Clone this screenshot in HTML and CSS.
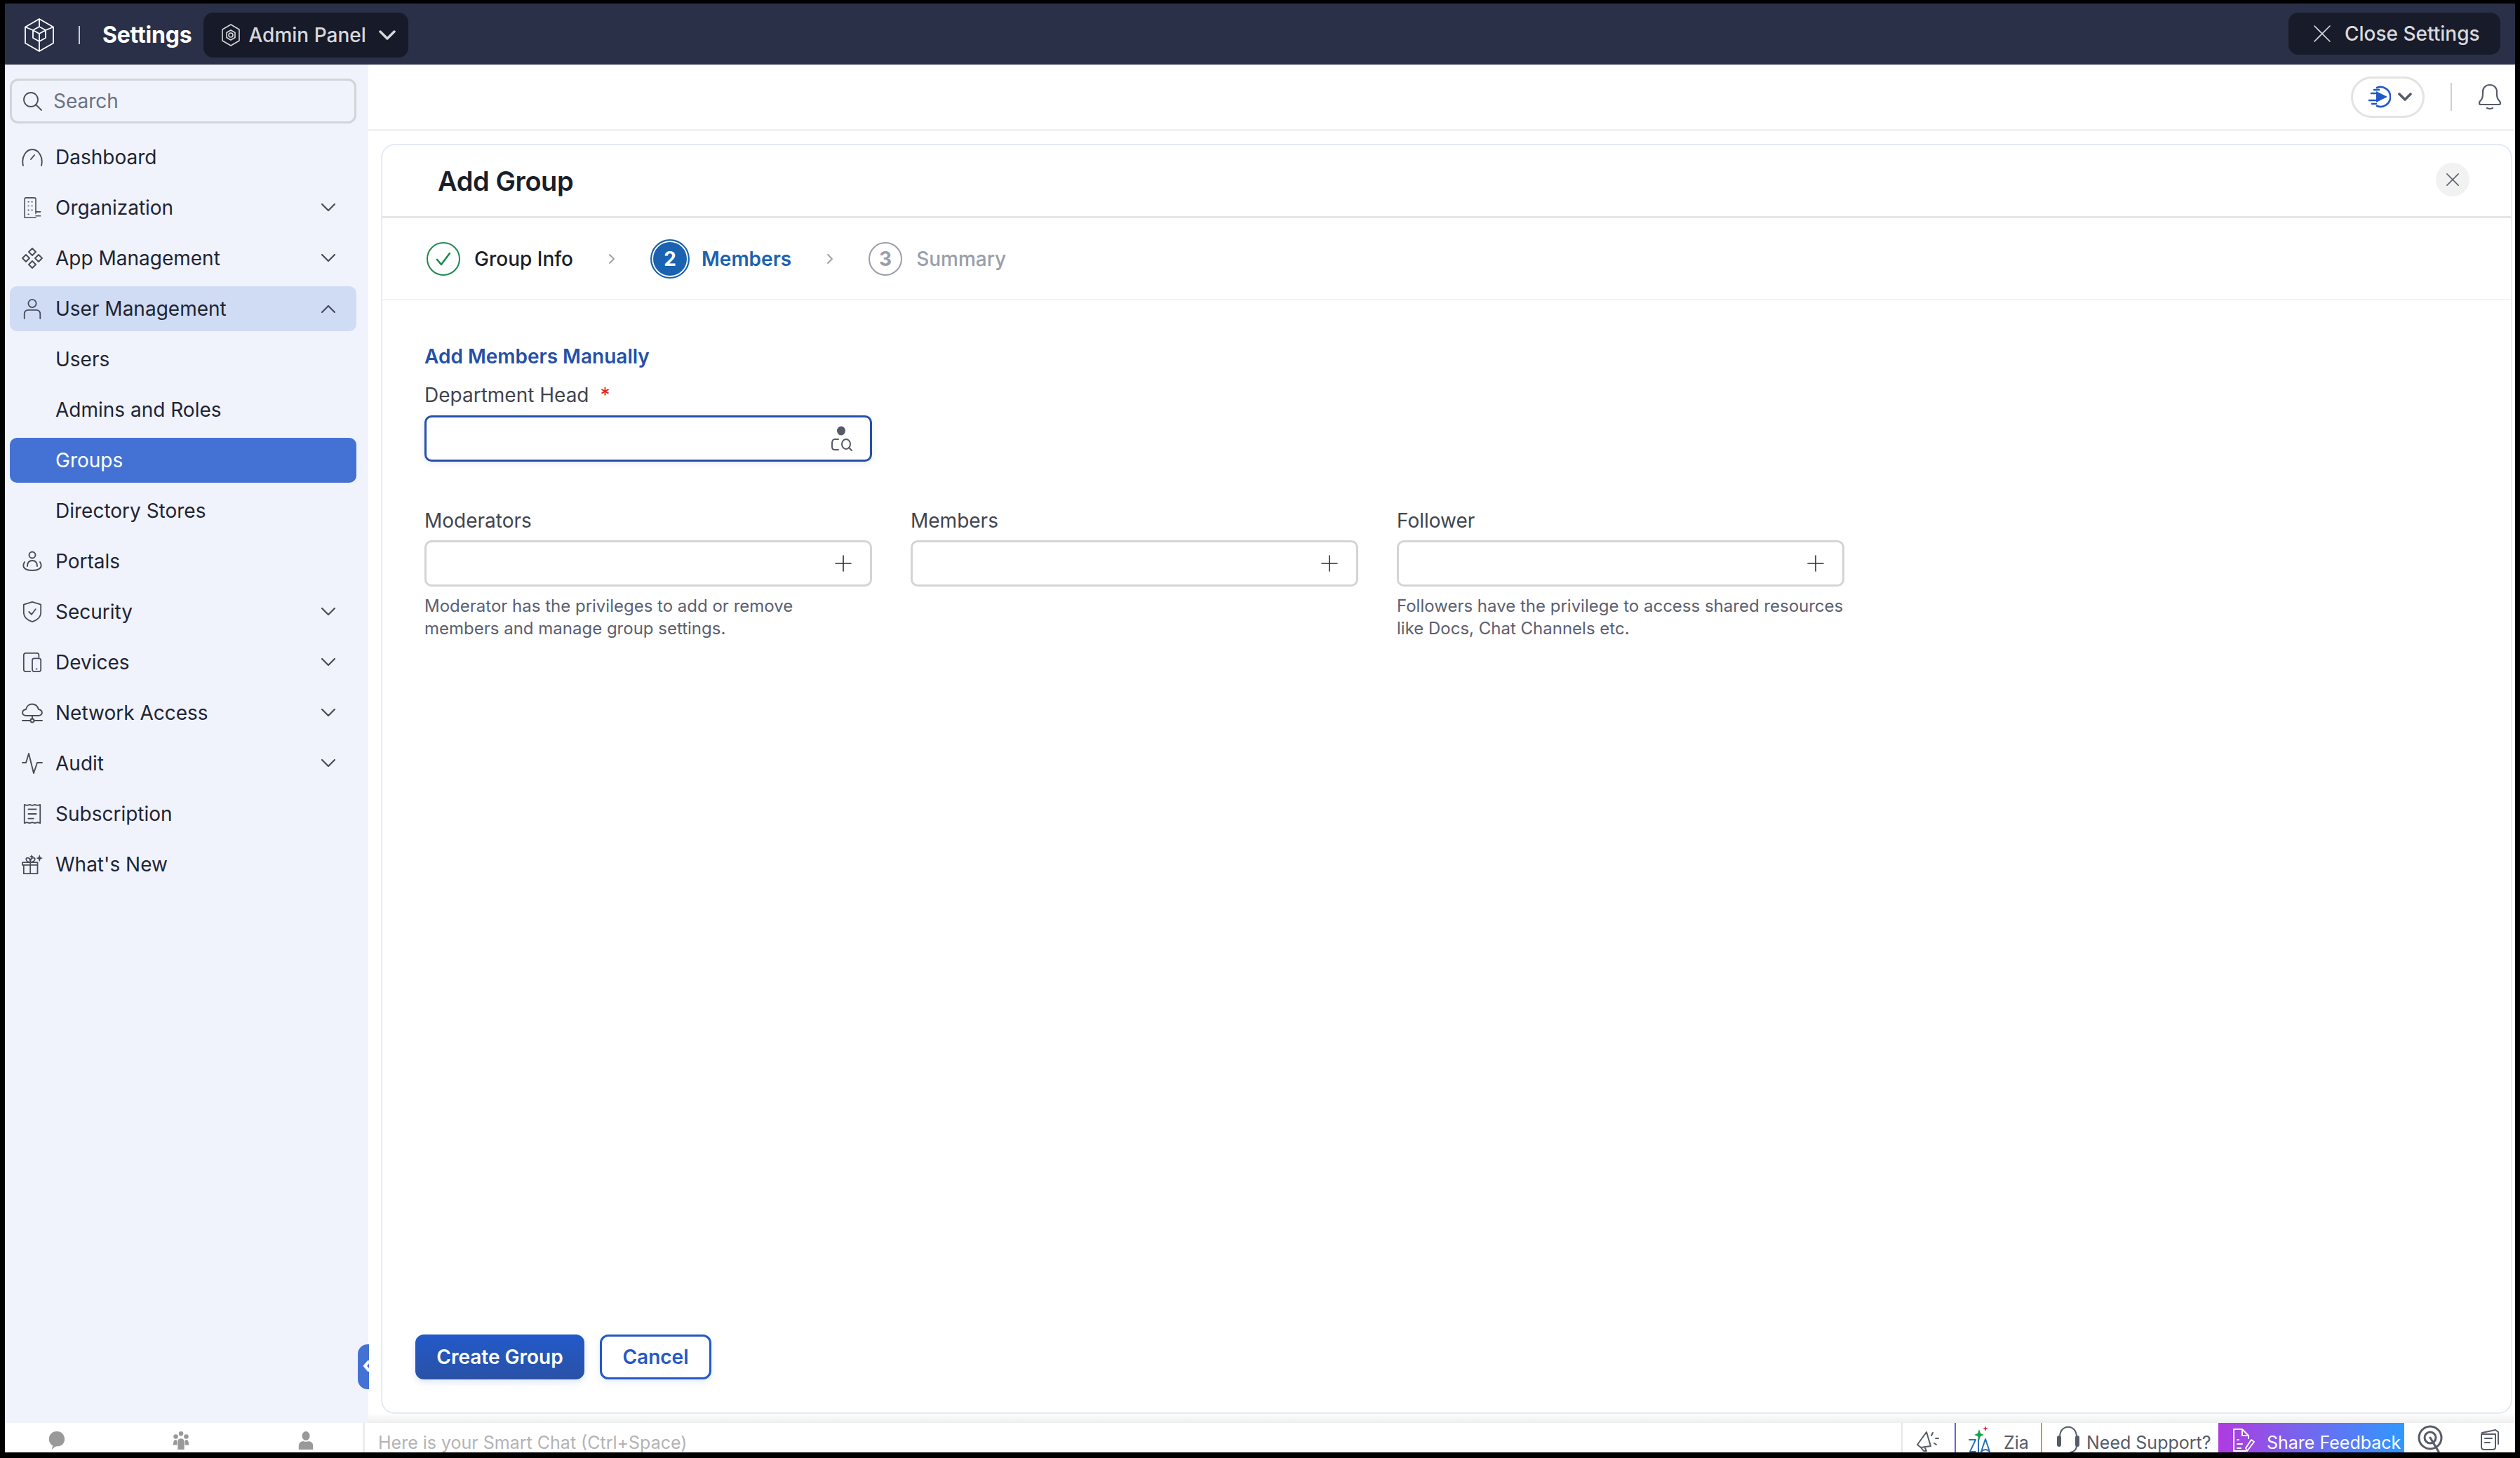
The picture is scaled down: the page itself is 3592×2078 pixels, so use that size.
FILE: index.html
```html
<!DOCTYPE html>
<html lang="en">
<head>
	<meta charset="UTF-8">
	<title>Add Group</title>
	<link rel="stylesheet" href="styles.css">
</head>
<body>
	<div class="frame">
		<div class="topbar">
			<svg class="logo" viewBox="0 0 42 48"><path d="M21 1 41 12.5V35.5L21 47 1 35.5V12.5ZM21 12 30 17V28L21 33 12 28V17ZM12 17 21 22 30 17M21 22V33M1 12.5 12 17M41 12.5 30 17M21 33V47M21 1V12"/></svg>
			<span class="top-divider"></span>
			<span class="top-title">Settings</span>
			<div class="top-pill">
				<svg class="pill-icon" viewBox="0 0 26 32"><path d="M13 1 25 8V24L13 31 1 24V8Z"/><circle cx="13" cy="16" r="3"/><path d="M13 9 19 12.500V19.500L13 23 7 19.500V12.500Z"/></svg>
				<span>Admin Panel</span>
				<svg class="pill-chevron" viewBox="0 0 24 14"><path d="M2 2 12 12 22 2"/></svg>
			</div>
			<div class="close-settings">
				<svg class="close-x" viewBox="0 0 24 24"><path d="M1 1 23 23M23 1 1 23"/></svg>
				<span>Close Settings</span>
			</div>
		</div>

		<div class="middle">
			<div class="sidebar">
				<div class="search">
					<svg class="search-icon" viewBox="0 0 28 28"><circle cx="12" cy="12" r="10"/><path d="M19 19 27 27"/></svg>
					<span>Search</span>
				</div>
				<ul class="nav">
					<li class="nav-item"><svg class="nav-icon" viewBox="0 0 30 30"><path d="M2 27C-1 15 6 4 15 4S31 15 28 27M18 12 13 18"/></svg><span>Dashboard</span></li>
					<li class="nav-item"><svg class="nav-icon" viewBox="0 0 30 36"><path d="M2 35V3Q2 1 4 1H18Q21 1 21 3V28M2 35H21M21 25H29M21 32H29M8 8H9M14 8H15M8 15H9M14 15H15M8 22H9M14 22H15M8 29H9"/></svg><span>Organization</span><svg class="chev" viewBox="0 0 20 12"><path d="M1 1 10 10 19 1"/></svg></li>
					<li class="nav-item"><svg class="nav-icon" viewBox="0 0 30 30"><path d="M15 1 20 6 15 11 10 6ZM15 19 20 24 15 29 10 24ZM6 10 11 15 6 20 1 15ZM24 10 29 15 24 20 19 15Z"/></svg><span>App Management</span><svg class="chev" viewBox="0 0 20 12"><path d="M1 1 10 10 19 1"/></svg></li>
					<li class="nav-item open"><svg class="nav-icon" viewBox="0 0 30 32"><circle cx="15" cy="8" r="6"/><path d="M3 31V24Q3 18 9 18H21Q27 18 27 24V31"/></svg><span>User Management</span><svg class="chev" viewBox="0 0 20 12"><path d="M1 11 10 2 19 11"/></svg></li>
					<li class="nav-item sub"><span>Users</span></li>
					<li class="nav-item sub"><span>Admins and Roles</span></li>
					<li class="nav-item sub active"><span>Groups</span></li>
					<li class="nav-item sub"><span>Directory Stores</span></li>
					<li class="nav-item"><svg class="nav-icon" viewBox="0 0 30 30"><circle cx="15" cy="6" r="4.500"/><path d="M4 16C-1 24 6 28 15 28S31 24 26 16M8 22Q8 14 15 14T22 22"/></svg><span>Portals</span></li>
					<li class="nav-item"><svg class="nav-icon" viewBox="0 0 30 32"><path d="M15 1 28 5V17C28 24 22 29 15 31 8 29 2 24 2 17V5ZM10 16 14 20 20 12"/></svg><span>Security</span><svg class="chev" viewBox="0 0 20 12"><path d="M1 1 10 10 19 1"/></svg></li>
					<li class="nav-item"><svg class="nav-icon" viewBox="0 0 30 32"><path d="M12 30H5Q2 30 2 27V5Q2 2 5 2H22Q25 2 25 5V8M15 13Q15 10 18 10H25Q28 10 28 13V27Q28 30 25 30H18Q15 30 15 27ZM21 26H22"/></svg><span>Devices</span><svg class="chev" viewBox="0 0 20 12"><path d="M1 1 10 10 19 1"/></svg></li>
					<li class="nav-item"><svg class="nav-icon" viewBox="0 0 30 30"><path d="M6 19C-1 18 0 11 6 10 8 0 21 0 24 10 30 11 31 18 24 19ZM1 26H12M18 26H29M15 19V23"/><circle cx="15" cy="26" r="2.500"/></svg><span>Network Access</span><svg class="chev" viewBox="0 0 20 12"><path d="M1 1 10 10 19 1"/></svg></li>
					<li class="nav-item"><svg class="nav-icon" viewBox="0 0 30 30"><path d="M1 14H6L10 1 17 29 22 14H29"/></svg><span>Audit</span><svg class="chev" viewBox="0 0 20 12"><path d="M1 1 10 10 19 1"/></svg></li>
					<li class="nav-item"><svg class="nav-icon" viewBox="0 0 30 32"><path d="M3 2 7 3 11 2 15 3 19 2 23 3 27 2V30L23 29 19 30 15 29 11 30 7 29 3 30ZM9 9H21M9 16H21M9 23H17"/></svg><span>Subscription</span></li>
					<li class="nav-item"><svg class="nav-icon" viewBox="0 0 32 32"><path d="M3 17H24V30H3ZM1 13H24V17H1ZM13 13V30M13 13C6 12 5 6 9 6S13 10 13 13C13 10 14 6 18 6S20 12 13 13"/><path class="fill" d="M27 1 28.500 5 32 6.500 28.500 8 27 12 25.500 8 22 6.500 25.500 5ZM15 1 16 3 18 4 16 5 15 7 14 5 12 4 14 3Z"/></svg><span>What's New</span></li>
				</ul>
			</div>
			<div class="side-handle"><span class="handle-arrow">‹</span></div>

			<div class="main">
				<div class="main-header">
					<div class="guide-pill">
						<svg class="guide-icon" viewBox="0 0 34 32"><path d="M14 3A14 14 0 1 1 14 29M10 6H17M6 11H12M3 21H12M7 26H13"/><path class="fill" d="M13 8 29 16 13 24Z"/></svg>
						<svg class="guide-chev" viewBox="0 0 20 12"><path d="M2 2 10 10 18 2"/></svg>
					</div>
					<span class="header-divider"></span>
					<svg class="bell" viewBox="0 0 34 38"><path d="M2 28Q2 26 4 24 7 21 7 15V12C7 6 11 2 17 2S27 6 27 12V15C27 21 30 24 30 24 32 26 32 28 32 28 32 29 31 30 30 30H4C3 30 2 29 2 28ZM13 35Q17 37 21 35"/></svg>
				</div>

				<div class="card">
					<div class="card-title">
						<h1>Add Group</h1>
						<div class="card-close"><svg viewBox="0 0 20 20"><path d="M1 1 19 19M19 1 1 19"/></svg></div>
					</div>

					<div class="steps">
						<div class="step done">
							<div class="step-num"><svg viewBox="0 0 22 20"><path d="M2 11 8 18 20 2"/></svg></div>
							<span>Group Info</span>
						</div>
						<svg class="step-arrow" viewBox="0 0 10 16"><path d="M2 2 8 8 2 14"/></svg>
						<div class="step current">
							<div class="step-num">2</div>
							<span>Members</span>
						</div>
						<svg class="step-arrow" viewBox="0 0 10 16"><path d="M2 2 8 8 2 14"/></svg>
						<div class="step todo">
							<div class="step-num">3</div>
							<span>Summary</span>
						</div>
					</div>

					<div class="card-body">
						<h2>Add Members Manually</h2>
						<div class="field">
							<label>Department Head <span class="req">*</span></label>
							<div class="input focus">
								<svg class="find-user" viewBox="0 0 32 36"><ellipse class="fill" cx="15" cy="7" rx="6" ry="6.500"/><path d="M11 19H6Q2 19 2 25V30Q2 34 6 34H11M26 31 30 35"/><ellipse cx="22" cy="26" rx="6" ry="7"/></svg>
							</div>
						</div>
						<div class="field-row">
							<div class="field">
								<label>Moderators</label>
								<div class="input"><svg class="plus" viewBox="0 0 24 24"><path d="M12 1V23M1 12H23"/></svg></div>
								<p class="hint">Moderator has the privileges to add or remove members and manage group settings.</p>
							</div>
							<div class="field">
								<label>Members</label>
								<div class="input"><svg class="plus" viewBox="0 0 24 24"><path d="M12 1V23M1 12H23"/></svg></div>
							</div>
							<div class="field">
								<label>Follower</label>
								<div class="input"><svg class="plus" viewBox="0 0 24 24"><path d="M12 1V23M1 12H23"/></svg></div>
								<p class="hint">Followers have the privilege to access shared resources like Docs, Chat Channels etc.</p>
							</div>
						</div>
					</div>

					<div class="card-foot">
						<button class="btn primary">Create Group</button>
						<button class="btn outline">Cancel</button>
					</div>
				</div>
			</div>
		</div>

		<div class="bottombar">
			<div class="chat-tabs">
				<div class="chat-tab">
					<svg viewBox="0 0 28 28"><path d="M15 0C22 0 27 5 27 12S22 23 15 23L12 24 7 28 9 22C5 20 3 16 3 12 3 5 8 0 15 0Z"/></svg>
					<span>Chats</span>
				</div>
				<div class="chat-tab">
					<svg viewBox="0 0 28 28"><circle cx="14" cy="3.500" r="3.500"/><circle cx="6" cy="8" r="3.500"/><circle cx="22" cy="8" r="3.500"/><path d="M9 28V16Q9 11 14 11T19 16V28ZM2 21Q2 13 6 13 8 13 8 16V21ZM26 21Q26 13 22 13 20 13 20 16V21Z"/></svg>
					<span>Channels</span>
				</div>
				<div class="chat-tab">
					<svg viewBox="0 0 28 28"><ellipse cx="14" cy="7" rx="6" ry="7"/><path d="M3 28V22Q3 16 10 15 14 17 18 15 25 16 25 22V28Z"/></svg>
					<span>Contacts</span>
				</div>
			</div>
			<div class="smart-chat">Here is your Smart Chat (Ctrl+Space)</div>
			<div class="bottom-tools">
				<div class="tool tool-announce">
					<svg class="icon-speaker" viewBox="0 0 34 32"><path d="M2 22 15 4 21 24 7 26ZM7 26 11 31H15L12 25M24 5 22 9M28 13H32M26 20 29 22"/></svg>
				</div>
				<div class="tool tool-zia">
					<svg class="icon-zia" viewBox="0 0 32 42"><path class="zia-line" d="M1 21H10L2 38H10M14 20V38M18 38 24 20 30 38Q24 32 18 38"/><path class="zia-green" d="M15 6 17 12 22 14 17 16 15 22 13 16 8 14 13 12Z"/><path class="zia-red" d="M24 1 25 4 28 5 25 6 24 9 23 6 20 5 23 4Z"/></svg>
					<span>Zia</span>
				</div>
				<div class="tool tool-support">
					<svg class="icon-headset" viewBox="0 0 34 42"><path d="M5 16C5 -3 29 -3 29 16V28C29 33 26 37 20 38"/><rect class="fill" x="1" y="14" width="6" height="16" rx="3"/><rect class="fill" x="27" y="14" width="6" height="16" rx="3"/></svg>
					<span>Need Support?</span>
				</div>
				<div class="tool tool-feedback">
					<svg class="icon-feedback" viewBox="0 0 34 34"><path d="M20 33H3V2H15L24 11V15M15 2V11H24M8 17H10M8 23H15M8 29H13M22 33 32 20 28 17 20 29Z"/></svg>
					<span>Share Feedback</span>
				</div>
				<div class="tool tool-target">
					<svg class="icon-target" viewBox="0 0 36 42"><circle cx="18" cy="18" r="16"/><circle cx="18" cy="18" r="8"/><path d="M18 18 30 38"/></svg>
				</div>
				<div class="tool tool-notes">
					<svg class="icon-notes" viewBox="0 0 30 32"><path d="M5 6 24 2 28 5V22M4 8H24V26Q24 30 20 30H8Q4 30 4 26ZM9 14H19M9 20H16"/></svg>
				</div>
			</div>
		</div>
	</div>
</body>
</html>
```

FILE: styles.css
```css
* { margin: 0; padding: 0; box-sizing: border-box; }
body { background: #000; font-family: "Inter", "Liberation Sans", sans-serif; }
ul { list-style: none; }
svg { display: block; flex: none; fill: none; stroke-linecap: round; stroke-linejoin: round; }
.frame { width: 3578px; height: 2065px; margin: 5px 7px 8px; display: flex; flex-direction: column; background: #fff; overflow: hidden; }

/* top bar */
.topbar { height: 87px; flex: none; background: #2a3047; display: flex; align-items: flex-start; padding: 13px 21px 0 28px; }
.logo { width: 42px; height: 48px; margin-top: 8px; stroke: #fff; stroke-width: 1.8; }
.top-divider { width: 2px; height: 26px; background: #c9ccd4; margin: 19px 0 0 35px; }
.top-title { font-size: 32px; font-weight: 700; color: #fff; line-height: 64px; margin-left: 32px; letter-spacing: -0.2px; }
.top-pill { height: 64px; width: 292px; margin-left: 17px; background: #171a28; border-radius: 14px; display: flex; align-items: center; padding-left: 26px; color: #d7d8dc; font-size: 28px; font-weight: 500; }
.pill-icon { width: 26px; height: 32px; margin-right: 12px; stroke: #d7d8dc; stroke-width: 1.6; }
.pill-chevron { width: 24px; height: 14px; margin-left: 18px; stroke: #d7d8dc; stroke-width: 3.5; }
.close-settings { margin-left: auto; height: 60px; width: 302px; background: #181c2a; border-radius: 14px; display: flex; align-items: center; padding-left: 36px; color: #d8dadf; font-size: 28px; font-weight: 500; }
.close-x { width: 24px; height: 24px; margin-right: 20px; stroke: #d8dadf; stroke-width: 1.6; }

/* sidebar */
.middle { flex: 1; display: flex; position: relative; min-height: 0; }
.sidebar { width: 518px; flex: none; background: #f0f3fb; padding: 20px 17px 0 7px; }
.search { height: 64px; border: 3px solid #d2d4d9; border-radius: 12px; display: flex; align-items: center; padding-left: 15px; color: #6b7280; font-size: 28px; }
.search-icon { width: 28px; height: 28px; margin-right: 16px; stroke: #4a4f5c; stroke-width: 1.8; }
.nav { margin-top: 16px; display: flex; flex-direction: column; gap: 8px; }
.nav-item { height: 64px; border-radius: 10px; display: flex; align-items: center; padding: 0 30px 0 17px; color: #1f2433; font-size: 28px; }
.nav-item span { flex: 1; }
.nav-item.open { background: #d0dcf4; }
.nav-item.sub { padding-left: 65px; }
.nav-item.active { background: #4472d4; color: #fff; }
.nav-icon { width: 30px; height: 30px; margin-right: 18px; stroke: #474c5a; stroke-width: 1.9; }
.nav-icon .fill { fill: #474c5a; stroke: none; }
.chev { width: 20px; height: 12px; stroke: #474c5a; stroke-width: 2.2; }
.side-handle { position: absolute; left: 503px; top: 1824px; width: 16px; height: 64px; background: #4472d4; border-radius: 14px 0 0 14px; overflow: hidden; color: #fff; font-size: 34px; line-height: 58px; }
.handle-arrow { margin-left: 6px; font-weight: 700; }

/* main */
.main { flex: 1; min-width: 0; display: flex; flex-direction: column; background: linear-gradient(#fff calc(100% - 14px), #eeeeef); }
.main-header { height: 95px; flex: none; border-bottom: 3px solid #f1f1f2; display: flex; align-items: center; justify-content: flex-end; padding-right: 19px; }
.guide-pill { width: 105px; height: 59px; border: 3px solid #e3e3e5; border-radius: 30px; display: flex; align-items: center; padding-left: 20px; }
.guide-icon { width: 34px; height: 32px; margin-right: 10px; stroke: #2259c9; stroke-width: 2.6; }
.guide-icon .fill { fill: #2259c9; stroke: none; }
.guide-chev { width: 20px; height: 12px; stroke: #565b68; stroke-width: 3.6; }
.header-divider { width: 2px; height: 40px; background: #cfcfd2; margin: 0 37px; }
.bell { width: 34px; height: 38px; stroke: #565b68; stroke-width: 2.2; }

.card { flex: 1; margin: 18px 4px 13px 18px; border: 2px solid #e4eaf7; border-radius: 20px; background: #fff; display: flex; flex-direction: column; }
.card-title { height: 104px; flex: none; border-bottom: 3px solid #e6e6e7; display: flex; align-items: center; justify-content: space-between; padding: 0 59px 0 79px; }
.card-title h1 { font-size: 38px; font-weight: 600; color: #1a1e2b; letter-spacing: -0.4px; }
.card-close { width: 48px; height: 48px; border-radius: 50%; background: #f2f2f2; display: flex; align-items: center; justify-content: center; margin-bottom: 4px; }
.card-close svg { width: 18px; height: 18px; stroke: #5c616e; stroke-width: 1.8; }

.steps { height: 117px; flex: none; border-bottom: 2px solid #f3f3f4; display: flex; align-items: center; padding-left: 63px; font-size: 28px; font-weight: 500; }
.step { display: flex; align-items: center; gap: 20px; }
.step-num { width: 48px; height: 48px; border-radius: 50%; border: 2px solid #9a9ea8; display: flex; align-items: center; justify-content: center; font-weight: 700; }
.step.done { color: #1a1e2b; }
.step.done .step-num { border-color: #1d8a4e; }
.step.done svg { width: 22px; height: 20px; stroke: #1d8a4e; stroke-width: 2.6; }
.step.current { color: #1b62b0; gap: 17px; font-weight: 600; }
.step.current .step-num { width: 56px; height: 56px; margin: -4px 0; background: #1b62b0; border: 2px solid #1b62b0; box-shadow: inset 0 0 0 2px #fff; color: #fff; }
.step.todo { color: #9a9ea8; }
.step.todo .step-num { color: #9a9ea8; }
.step-arrow { width: 10px; height: 16px; margin: 0 50px; stroke: #9a9ea8; stroke-width: 1.8; }

.card-body { flex: 1; padding: 63px 0 0 60px; }
.card-body h2 { font-size: 28px; line-height: 34px; font-weight: 600; color: #2450a8; margin-bottom: 21px; }
.field { width: 638px; }
.field label { display: block; font-size: 28px; line-height: 34px; color: #40454f; margin-bottom: 12px; }
.field .req { color: #e8202a; margin-left: 8px; }
.input { height: 66px; border: 3px solid #d4d4d6; border-radius: 10px; display: flex; align-items: center; justify-content: flex-end; padding-right: 26px; }
.input.focus { border-color: #2450a8; box-shadow: 0 2px 10px rgba(36, 80, 168, .12); padding-right: 24px; }
.find-user { width: 32px; height: 36px; stroke: #565b68; stroke-width: 2; }
.find-user .fill { fill: #565b68; stroke: none; }
.plus { width: 24px; height: 24px; stroke: #2a2e3a; stroke-width: 1.6; }
.field-row { display: flex; gap: 55px; margin-top: 67px; }
.field-row .field label { margin-bottom: 11px; }
.hint { margin-top: 12px; font-size: 24px; line-height: 32px; color: #5b6070; }

.card-foot { flex: none; display: flex; gap: 22px; padding: 0 0 47px 47px; }
.btn { height: 64px; border-radius: 12px; font-family: inherit; font-size: 28px; font-weight: 600; }
.btn.primary { width: 241px; border: none; background: linear-gradient(#2259c9, #2a52a6); color: #fff; box-shadow: 0 4px 10px rgba(34, 89, 201, .15); }
.btn.outline { width: 159px; border: 3px solid #2259c9; background: #fff; color: #2259c9; box-shadow: 0 4px 10px rgba(34, 89, 201, .1); }

/* bottom bar */
.bottombar { height: 42px; flex: none; display: flex; background: #fff; overflow: hidden; position: relative; }
.chat-tabs { width: 513px; flex: none; display: flex; gap: 32px; border-right: 3px solid #ececee; }
.chat-tab { width: 146px; display: flex; flex-direction: column; align-items: center; padding-top: 12px; color: #8a8a8a; font-size: 22px; line-height: 26px; }
.chat-tab svg { width: 28px; height: 26px; fill: #999; margin-bottom: 4px; }
.smart-chat { flex: 1; padding-left: 19px; font-size: 25px; line-height: 56px; color: #b3b3b5; white-space: nowrap; }
.bottom-tools { display: flex; flex: none; height: 42px; color: #565b68; font-size: 25px; }
.tool { display: flex; align-items: center; height: 42px; }
.tool svg { stroke: #565b68; stroke-width: 2; }
.tool span { line-height: 56px; height: 42px; }
.tool-announce { width: 76px; border-left: 2px solid #e6e6e8; padding-left: 19px; }
.icon-speaker { width: 34px; height: 32px; margin-top: 8px; }
.tool-zia { width: 123px; border-left: 2px solid #6a62d8; padding-left: 18px; gap: 18px; }
.icon-zia { width: 32px; height: 42px; margin-top: 6px; }
.tool svg.icon-zia .zia-line { stroke: #2a72b8; stroke-width: 2; }
.tool svg.icon-zia .zia-green { fill: #15a04a; stroke: none; }
.tool svg.icon-zia .zia-red { fill: #e02a3a; stroke: none; }
.tool-support { width: 253px; border-left: 2px solid #f0902a; padding-left: 20px; gap: 9px; }
.icon-headset { width: 34px; height: 42px; margin-top: 8px; }
.tool svg .fill { fill: #565b68; stroke: none; }
.tool-feedback { width: 265px; background: linear-gradient(90deg, #b03be0, #3098ff); color: #fff; padding-left: 19px; gap: 16px; }
.tool svg.icon-feedback { width: 34px; height: 34px; margin-top: 6px; stroke: #fff; }
.tool-target { width: 106px; padding-left: 19px; }
.icon-target { width: 36px; height: 42px; margin-top: 6px; stroke-width: 3 !important; }
.tool-notes { width: 52px; }
.icon-notes { width: 30px; height: 32px; margin-top: 6px; }
```
